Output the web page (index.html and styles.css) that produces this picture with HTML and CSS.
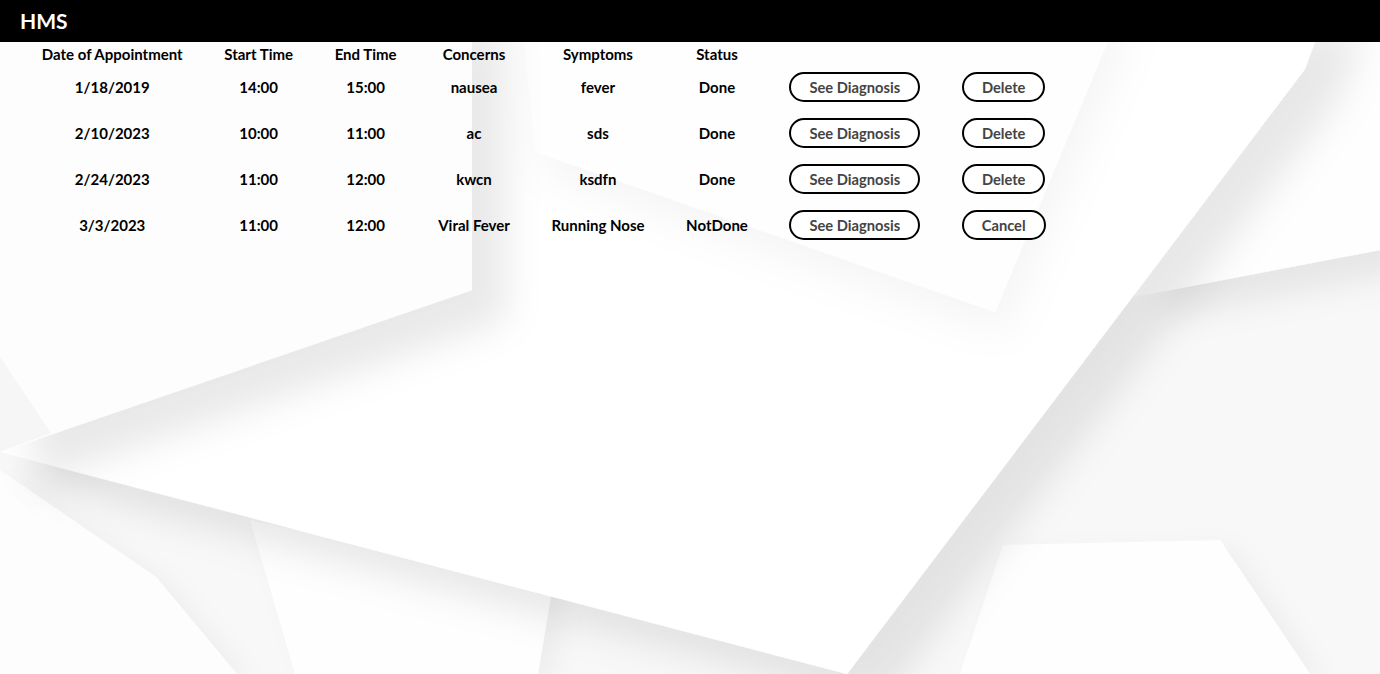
FILE: index.html
```html
<!DOCTYPE html>
<html lang="en">
<head>
<meta charset="utf-8">
<title>HMS</title>
<link rel="stylesheet" href="styles.css">
</head>
<body>
<svg class="backdrop" width="1380" height="674" viewBox="0 0 1380 674" aria-hidden="true">
  <defs>
    <filter id="shBig" x="-30%" y="-30%" width="160%" height="160%">
      <feDropShadow dx="34" dy="30" stdDeviation="18" flood-color="#000" flood-opacity="0.085"/>
    </filter>
    <filter id="shMid" x="-30%" y="-30%" width="160%" height="160%">
      <feDropShadow dx="26" dy="22" stdDeviation="16" flood-color="#000" flood-opacity="0.07"/>
    </filter>
    <filter id="shSoft" x="-30%" y="-30%" width="160%" height="160%">
      <feDropShadow dx="10" dy="22" stdDeviation="20" flood-color="#000" flood-opacity="0.04"/>
    </filter>
    <filter id="shLow" x="-30%" y="-30%" width="160%" height="160%">
      <feDropShadow dx="14" dy="8" stdDeviation="12" flood-color="#000" flood-opacity="0.045"/>
    </filter>
  </defs>
  <rect width="1380" height="674" fill="#f8f8f8"/>
  <polygon points="1003,545 1220,540 1310,674 960,674" fill="#fefefe" filter="url(#shLow)"/>
  <polygon points="0,470 156,577 237,674 0,674" fill="#fdfdfd" filter="url(#shLow)"/>
  <polygon points="250,520 553,583 538,674 295,674" fill="#fefefe" filter="url(#shLow)"/>
  <polygon points="1134,297 1380,250 1380,0 1250,0" fill="#fefefe" filter="url(#shMid)"/>
  <polygon points="0,452 847,674 1305,69 1330,0 420,0" fill="#ffffff" filter="url(#shBig)"/>
  <polygon points="536,152 995,312 1125,0 520,0" fill="#fefefe" filter="url(#shSoft)"/>
  <polygon points="0,0 472,0 472,290 0,452" fill="#fdfdfd" filter="url(#shBig)"/>
  <polygon points="0,357 51,433 0,452" fill="#f6f6f6"/>
</svg>

<header class="topbar">
  <span class="brand">HMS</span>
</header>

<main class="content">
  <table class="appts">
    <thead>
      <tr>
        <th>Date of Appointment</th>
        <th>Start Time</th>
        <th>End Time</th>
        <th>Concerns</th>
        <th>Symptoms</th>
        <th>Status</th>
        <th></th>
        <th></th>
      </tr>
    </thead>
    <tbody>
      <tr>
        <td>1/18/2019</td><td>14:00</td><td>15:00</td><td>nausea</td><td>fever</td><td>Done</td>
        <td><button class="pill">See Diagnosis</button></td>
        <td><button class="pill">Delete</button></td>
      </tr>
      <tr>
        <td>2/10/2023</td><td>10:00</td><td>11:00</td><td>ac</td><td>sds</td><td>Done</td>
        <td><button class="pill">See Diagnosis</button></td>
        <td><button class="pill">Delete</button></td>
      </tr>
      <tr>
        <td>2/24/2023</td><td>11:00</td><td>12:00</td><td>kwcn</td><td>ksdfn</td><td>Done</td>
        <td><button class="pill">See Diagnosis</button></td>
        <td><button class="pill">Delete</button></td>
      </tr>
      <tr>
        <td>3/3/2023</td><td>11:00</td><td>12:00</td><td>Viral Fever</td><td>Running Nose</td><td>NotDone</td>
        <td><button class="pill">See Diagnosis</button></td>
        <td><button class="pill">Cancel</button></td>
      </tr>
    </tbody>
  </table>
</main>
</body>
</html>
```

FILE: styles.css
```css
html, body {
  margin: 0;
  padding: 0;
}
body {
  position: relative;
  width: 1380px;
  height: 674px;
  overflow: hidden;
  font-family: Lato, "Liberation Sans", sans-serif;
  background: #f8f8f8;
  color: #000;
}
.backdrop {
  position: absolute;
  top: 0;
  left: 0;
  z-index: 0;
}
.topbar {
  position: relative;
  z-index: 1;
  height: 42px;
  background: #000;
  display: flex;
  align-items: center;
  padding-left: 20px;
}
.brand {
  color: #fff;
  font-weight: 700;
  font-size: 21px;
  line-height: 1;
  margin-top: -2px;
}
.content {
  position: relative;
  z-index: 1;
}
.appts {
  margin-left: 20px;
  border-spacing: 2px;
  font-size: 15px;
  font-weight: 700;
}
.appts th {
  padding: 1px 19.8px 0;
  height: 18px;
  line-height: 17px;
  text-align: center;
  font-weight: 700;
  white-space: nowrap;
}
.appts td {
  padding: 0 19.8px;
  height: 44px;
  text-align: center;
  white-space: nowrap;
}
.pill {
  font-family: Lato, "Liberation Sans", sans-serif;
  font-size: 14.7px;
  font-weight: 700;
  color: #444;
  background: #fff;
  border: 2px solid #000;
  border-radius: 16px;
  height: 30px;
  padding: 0 18px;
  cursor: pointer;
}
```
